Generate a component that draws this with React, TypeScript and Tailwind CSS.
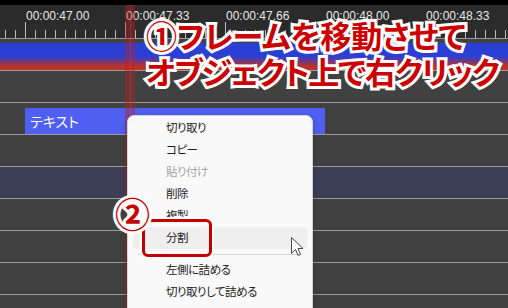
import React from "react";

const labels = ["00:00:47.00", "00:00:47.33", "00:00:47.66", "00:00:48.00", "00:00:48.33"];

function Ticks() {
  const ticks = [];
  for (let i = 0; i < 51; i++) {
    const x = 5.5 + i * 10;
    const major = (i - 2) % 10 === 0;
    ticks.push(
      <line key={i} x1={x} x2={x} y1={major ? 0 : 8} y2={16} stroke="#bcbcbc" strokeWidth={1} />
    );
  }
  return (
    <svg width="508" height="16" viewBox="0 0 508 16" className="absolute left-0 bottom-0">
      {ticks}
    </svg>
  );
}

function Row({ selected, children }: { selected?: boolean; children?: React.ReactNode }) {
  return (
    <div className={`h-[32px] border-b border-[#9b9b9b] ${selected ? "bg-[#3c3f55]" : "bg-[#414141]"}`}>
      {children}
    </div>
  );
}

function Item({ text, disabled, hover }: { text: string; disabled?: boolean; hover?: boolean }) {
  return (
    <div
      className={`mx-[5px] h-[22px] flex items-center pl-[33px] text-[11.5px] tracking-[-0.5px] rounded-[4px] ${
        disabled ? "text-[#a3a3a3]" : "text-[#1b1b1b]"
      } ${hover ? "bg-[#efefef]" : ""}`}
    >
      {text}
    </div>
  );
}

export default function App() {
  const jp = "font-['Noto_Sans_CJK_JP',sans-serif] [font-feature-settings:'palt']";
  return (
    <div className="relative w-[508px] h-[308px] overflow-hidden bg-[#414141]">
      <div className="h-[5px] bg-black" />
      <div className="relative h-[34px] bg-[#2b2b2b] border-b border-[#9b9b9b]">
        <div className="flex pl-[26px] pt-[4px] font-['Liberation_Sans',sans-serif] text-[12px] leading-[14px] text-[#e6e6e6]">
          {labels.map((l) => (
            <div key={l} className="w-[100px] shrink-0">
              {l}
            </div>
          ))}
        </div>
        <Ticks />
      </div>
      <Row>
        <div className="pt-[4px]">
          <div className="h-[27px] bg-[linear-gradient(to_bottom,#2b3fd4_0%,#2b3fd4_50%,#b8322a_85%,#c0332a_100%)]" />
        </div>
      </Row>
      <Row />
      <Row>
        <div className="pt-[5px]">
          <div className={`ml-[25px] w-[300px] h-[26px] bg-[#4f5ff2] text-white text-[14px] leading-[26px] pl-[5px] ${jp}`}>
            テキスト
          </div>
        </div>
      </Row>
      <Row />
      <Row selected />
      <Row />
      <Row />
      <Row />
      <Row />

      {/* playhead */}
      <div className="absolute left-[125px] top-[5px] bottom-0 w-[10px] bg-[rgba(190,30,30,0.42)]">
        <div className="ml-[5px] w-px h-full bg-[rgba(255,255,255,0.08)]" />
      </div>

      {/* context menu */}
      <div
        className={`absolute left-[127px] top-[115px] w-[186px] h-[220px] bg-[#f9f9f9] border border-[#d4d4d4] rounded-[7px] shadow-[0_2px_6px_rgba(0,0,0,0.25)] pt-[1px] ${jp}`}
      >
        <Item text="切り取り" />
        <Item text="コピー" />
        <Item text="貼り付け" disabled />
        <Item text="削除" />
        <Item text="複製" />
        <Item text="分割" hover />
        <div className="h-[10px] flex items-center mx-[10px]">
          <div className="h-px w-full bg-[#d2d2d2]" />
        </div>
        <Item text="左側に詰める" />
        <Item text="切り取りして詰める" />
      </div>

      {/* red highlight box */}
      <div className="absolute left-[142px] top-[219px] w-[70px] h-[38px] border-[3px] border-[#c40000] rounded-[6px] shadow-[0_0_0_2px_#ffffff]" />

      {/* cursor */}
      <svg width="14" height="21" viewBox="0 0 14 21" className="absolute left-[290px] top-[236px]">
        <path
          d="M1.5 1.5 L1.5 17.5 L5.5 13.5 L8 19.5 L10.5 18.5 L8 12.5 L13 12.5 Z"
          fill="#ffffff"
          stroke="#4a4a4a"
          strokeWidth="1"
          strokeLinejoin="round"
        />
      </svg>

      {/* circled 2 */}
      <div
        className={`absolute left-[115px] top-[193px] text-[35px] leading-[40px] font-bold text-[#c80000] [-webkit-text-stroke:6px_#ffffff] [paint-order:stroke_fill] ${jp}`}
      >
        ②
      </div>

      {/* annotation */}
      <div
        className={`absolute left-[146px] top-[17px] text-[31px] leading-[36px] font-bold text-[#cc0000] [-webkit-text-stroke:6px_#ffffff] [paint-order:stroke_fill] whitespace-nowrap ${jp}`}
      >
        <div>①フレームを移動させて</div>
        <div className="tracking-[-1.2px]">オブジェクト上で右クリック</div>
      </div>
    </div>
  );
}
